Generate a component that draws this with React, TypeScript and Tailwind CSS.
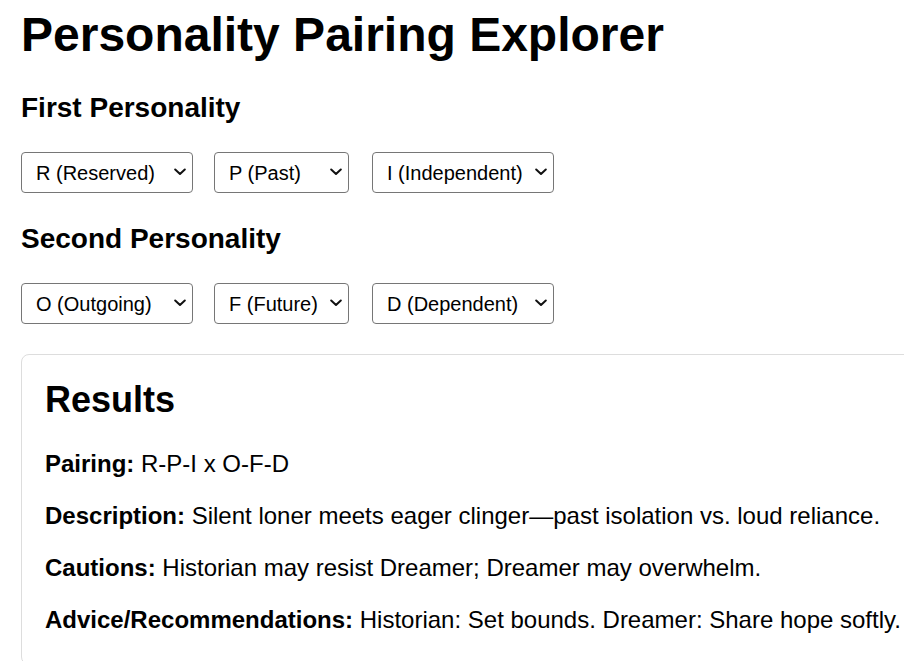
import { useState } from 'react';

const TRAITS = [
  {
    key: 'social',
    options: [
      { value: 'R', label: 'R (Reserved)' },
      { value: 'O', label: 'O (Outgoing)' },
    ],
    box: 'w-[172px]',
  },
  {
    key: 'time',
    options: [
      { value: 'P', label: 'P (Past)' },
      { value: 'F', label: 'F (Future)' },
    ],
    box: 'ml-[21px] w-[135px]',
  },
  {
    key: 'reliance',
    options: [
      { value: 'I', label: 'I (Independent)' },
      { value: 'D', label: 'D (Dependent)' },
    ],
    box: 'ml-[23px] w-[182px]',
  },
];

type Combo = [string, string, string];

function Chevron() {
  return (
    <svg
      className="pointer-events-none absolute right-[7px] top-[16px]"
      width="12"
      height="8"
      viewBox="0 0 12 8"
      fill="none"
    >
      <path d="M1.2 1.5 L6 6 L10.8 1.5" stroke="#111" strokeWidth="2" strokeLinecap="round" strokeLinejoin="round" />
    </svg>
  );
}

function TraitSelects({ value, onChange }: { value: Combo; onChange: (v: Combo) => void }) {
  return (
    <div className="flex">
      {TRAITS.map((trait, i) => (
        <div key={trait.key} className={`relative h-[41px] ${trait.box}`}>
          <select
            value={value[i]}
            onChange={(e) => {
              const next = [...value] as Combo;
              next[i] = e.target.value;
              onChange(next);
            }}
            className="h-full w-full appearance-none rounded-[4px] border border-[#767676] bg-white pl-[14px] text-[20px] text-black"
          >
            {trait.options.map((opt) => (
              <option key={opt.value} value={opt.value}>
                {opt.label}
              </option>
            ))}
          </select>
          <Chevron />
        </div>
      ))}
    </div>
  );
}

export default function App() {
  const [first, setFirst] = useState<Combo>(['R', 'P', 'I']);
  const [second, setSecond] = useState<Combo>(['O', 'F', 'D']);

  return (
    <div className="h-screen w-full overflow-hidden bg-white text-black" style={{ fontFamily: '"Liberation Sans", Arial, sans-serif' }}>
      <div className="pl-[21px] pt-[7px]">
        <h1 className="text-[48px] font-bold leading-[55px]">Personality Pairing Explorer</h1>

        <h2 className="mt-[30px] text-[28px] font-bold leading-[32px]">First Personality</h2>
        <div className="mt-[28px]">
          <TraitSelects value={first} onChange={setFirst} />
        </div>

        <h2 className="mt-[30px] text-[28px] font-bold leading-[32px]">Second Personality</h2>
        <div className="mt-[28px]">
          <TraitSelects value={second} onChange={setSecond} />
        </div>

        {/* Results card runs past the right edge, as in the page */}
        <div className="mt-[30px] w-max rounded-[8px] border border-[#dddddd] px-[23px] pt-[24px] pb-[30px]">
          <h2 className="text-[36px] font-bold leading-[41px]">Results</h2>
          <div className="mt-[30px] flex flex-col gap-[24px] text-[24px] leading-[28px]">
            <p>
              <strong>Pairing:</strong> {first.join('-')} x {second.join('-')}
            </p>
            <p>
              <strong>Description:</strong> Silent loner meets eager clinger—past isolation vs. loud reliance.
            </p>
            <p>
              <strong>Cautions:</strong> Historian may resist Dreamer; Dreamer may overwhelm.
            </p>
            <p>
              <strong>Advice/Recommendations:</strong> Historian: Set bounds. Dreamer: Share hope softly.
            </p>
          </div>
        </div>
      </div>
    </div>
  );
}
